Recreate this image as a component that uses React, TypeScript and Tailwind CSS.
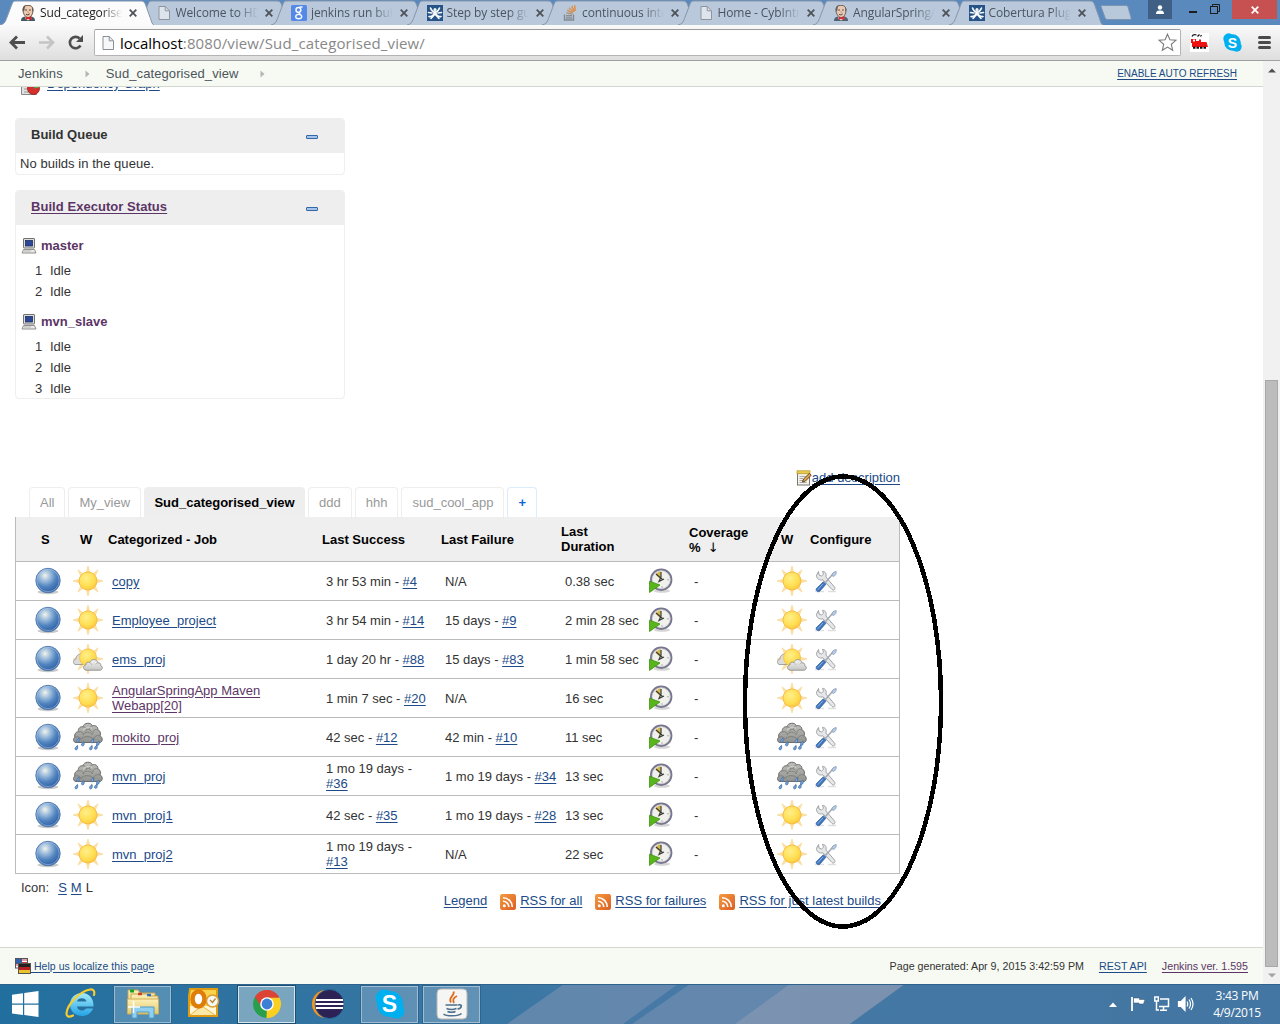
import React from "react";

type IconProps = { className?: string };

/* ---------- browser chrome icons ---------- */

const PageIcon = ({ className }: IconProps) => (
  <svg viewBox="0 0 16 16" className={className} width="16" height="16">
    <path d="M3 1.5h6.2l4.3 4.3v8.7H3z" fill="#f4f5f6" fillOpacity="0.7" stroke="#8a8f96" />
    <path d="M9.2 1.5v4.3h4.3" fill="none" stroke="#8a8f96" />
  </svg>
);

const JenkinsIcon = () => (
  <svg viewBox="0 0 16 16" width="16" height="16">
    <path d="M1 16c0-3 1.5-4 4-4.500h6c2.500.5 4 1.500 4 4.500z" fill="#3f5a66" />
    <path d="M5.500 11h5l1 2.500-3.500 2-3-2z" fill="#f4efe8" />
    <path d="M3 5c0-3.400 2-4.700 5-4.700s5 1.500 5 4.700c0 4-2 7.500-4.700 7.500S3 9 3 5z" fill="#eecbb0" stroke="#4a3a32" strokeWidth="0.8" />
    <path d="M3 6.500c-.8-3.500.3-6 3-6.200C4.600 1.500 4.800 3.500 4.200 6zM12.400 2c1.300 1.500 1 3.500.6 5l-.9-1z" fill="#5f554e" />
    <path d="M5.200 5h1.800M9 5h1.800M6 9.200c1.200 1 2.800.8 3.700-.3" stroke="#3c2e29" strokeWidth="0.9" fill="none" />
    <path d="M8 6v1.700l.8.200" stroke="#b98264" strokeWidth="0.7" fill="none" />
    <path d="M8 12.200l3.500-1v4l-3.500-1.200-2.500 1v-3.300z" fill="#d0232b" />
  </svg>
);

const GoogleIcon = () => (
  <span className="relative block h-4 w-4 rounded-[1.500px] bg-[#4a83ea]">
    <svg viewBox="0 0 16 16" width="16" height="16" fill="none" stroke="#fff">
      <circle cx="7.400" cy="4.900" r="2.400" strokeWidth="1.500" />
      <path d="M8.500 2h3M8.300 7.300c-.9 1 .4 1.300 1.300 2.200" strokeWidth="1.300" />
      <ellipse cx="7.700" cy="11.600" rx="3" ry="2.200" strokeWidth="1.400" />
    </svg>
  </span>
);

const CoberturaIcon = () => (
  <svg viewBox="0 0 16 16" width="16" height="16">
    <rect width="16" height="16" fill="#17477e" />
    <g stroke="#fff" fill="none" strokeWidth="1.600" strokeLinecap="round">
      <path d="M3.500 3c1 3 3 4 4.500 4.300C9.500 7 11.500 6 12.500 3M2 11.500c3 1 4-2 6-3 2 1 3 4 6 3M4 13.500L8 9l4 4.500M1.500 7.500L5 8M14.500 7.500L11 8" />
    </g>
    <circle cx="8" cy="4.500" r="1.500" fill="#fff" />
    <circle cx="8" cy="8.200" r="1.700" fill="#fff" />
  </svg>
);

const StackIcon = () => (
  <svg viewBox="0 0 16 16" width="16" height="16" fill="none" strokeWidth="1.400">
    <path d="M2.500 9.500v5.500h9V9.500" stroke="#7c8288" />
    <path d="M4 13h6M4 10.800h6" stroke="#83888d" />
    <path d="M4.300 7.800l6 1.500" stroke="#a9957c" />
    <path d="M5.200 5.200l5.500 3" stroke="#c58b55" />
    <path d="M7 2.700l4.500 4.500" stroke="#dd8a3c" />
    <path d="M9.700 1l2.600 5.500M12.700.3l.5 5.500" stroke="#e5822b" />
  </svg>
);

/* ---------- Jenkins icons ---------- */

const Ball = () => (
  <svg width="28" height="28" viewBox="0 0 28 28">
    <ellipse cx="14" cy="25" rx="10.500" ry="2.200" fill="#777" opacity="0.400" />
    <circle cx="14" cy="13.500" r="12.200" fill="url(#ballFill)" stroke="#4a74ad" strokeWidth="0.900" />
    <circle cx="14" cy="13.500" r="11.200" fill="none" stroke="#a9c5e6" strokeWidth="0.800" opacity="0.700" />
  </svg>
);

const sunRays =
  "M15 0l1.800 6.500h-3.600zM15 30l1.800-6.500h-3.600zM0 15l6.500-1.800v3.600zM30 15l-6.500-1.800v3.600zM5 3.800l5.500 4.200-2.600 2.500zM25 3.800l-5.500 4.200 2.600 2.500zM5 26.200l5.500-4.200-2.600-2.500zM25 26.200l-5.500-4.200 2.600-2.500z";

const Sun = () => (
  <svg width="30" height="30" viewBox="0 0 30 30">
    <path d={sunRays} fill="#fde2a0" stroke="#f6cf80" strokeWidth="0.500" />
    <circle cx="15" cy="15" r="9" fill="url(#sunFill)" stroke="#f5bd45" strokeWidth="1" />
  </svg>
);

const PartlyCloudy = () => (
  <svg width="30" height="30" viewBox="0 0 30 30">
    <path d={sunRays} fill="#fde2a0" stroke="#f6cf80" strokeWidth="0.500" />
    <path d="M2 20.500c-2.500-1.500-2-5 .8-5.300.2-3.500 3-6 6.200-5.200l2 10.500z" fill="#dcdcda" stroke="#8e8e8c" strokeWidth="0.800" />
    <circle cx="15" cy="13.500" r="8.500" fill="url(#sunFill)" stroke="#f5bd45" strokeWidth="0.800" />
    <path d="M13 26.200c-3-.3-3.400-4.500-.3-5.200-.1-2.600 2.500-3.500 4-2.400 1.300-4.100 7.300-4 8.200.3 2.200-.5 3.300 1.200 2.800 2.700 2.500.8 2 4.500-.9 4.600z" fill="url(#cloudFill)" stroke="#8f8f8d" strokeWidth="0.900" />
    <path d="M17 19c1 .2 1.700 1 1.800 2M24.800 19c-1 0-1.800.5-2.200 1.400" fill="none" stroke="#a9a9a7" strokeWidth="0.700" />
  </svg>
);

const drop = (x: number, y: number) => (
  <path key={`${x}-${y}`} d={`M${x + 2} ${y}c.4 2 .3 4.300-1.300 4.300S-1.300 2.800 ${x + 2} ${y}z`.replace("S-1.300 2.800 ", `c-1.900 0-1.500-2.300 1.300-4.300L`)} fill="#7aa6dc" stroke="#4674ae" strokeWidth="0.900" />
);

const Storm = () => (
  <svg width="30" height="30" viewBox="0 0 30 30">
    <path d="M3 20.500C0 20.200-.3 16.500 1.800 15.300 1 12 3 9.800 5.300 9.700 4.800 6.500 7.300 4.300 9.800 4.800c1.200-4.300 8-4.800 9.700-1 3-1 5.800 1.200 5.300 4 2.600.9 3.300 3.700 2.200 6 2.700 1.200 3.200 5.700.2 6.700z" fill="url(#stormFill)" stroke="#6c6c69" strokeWidth="1" />
    <g fill="none" stroke="#777774" strokeWidth="0.800">
      <path d="M5.500 9.800c3.200-.7 5 1 5 3.200M9.800 5c2.200-.4 4 1.300 4 3M19.400 4c-1.800.3-3 1.600-3 3.300M24.800 7.800c-3.500-.7-5.400 1.500-5 4M10 13c1-3.500 8-4 9.500 0M2 15.300c2.500-1.300 5.500 0 6 2.500M27 14c-3.400-1.200-6 .5-6.300 3.500M8 17.500c2-3.800 10-3.800 12.700 0M12 9.500c1.500-2.500 5-2.500 6.500 0" />
    </g>
    <path d="M10 8.500c2-3 6-4 9-2" fill="none" stroke="#d5d5d2" strokeWidth="1.200" opacity="0.700" />
    {drop(4, 16)}
    {drop(9, 19.500)}
    {drop(2.500, 23.500)}
    {drop(18.500, 16.500)}
    {drop(24, 19)}
    {drop(17, 23.500)}
    {drop(22, 23)}
  </svg>
);

const ClockIcon = () => (
  <svg width="24" height="26" viewBox="0 0 24 26">
    <ellipse cx="13" cy="23" rx="8" ry="1.800" fill="#888" opacity="0.350" />
    <circle cx="12.200" cy="11.700" r="10.200" fill="#f0f0ec" stroke="#77768f" strokeWidth="2" />
    <circle cx="12.200" cy="11.700" r="9" fill="none" stroke="#c9c9cf" strokeWidth="0.700" />
    <path d="M11.500 11.500L6.500 6.500C8.500 4 10.500 3.500 12 3.500z" fill="#d9b94a" />
    <path d="M7 6l6.500 5.500M12 4v5l-2 4.500 5-2.500" stroke="#3c3c36" strokeWidth="1.200" fill="none" />
    <circle cx="19" cy="11.700" r="0.700" fill="#999" />
    <circle cx="13" cy="19" r="0.700" fill="#999" />
    <path d="M.5 13.200l10.500 3.800L.5 24.500z" fill="#58b51c" stroke="#41920f" strokeWidth="0.800" />
  </svg>
);

const ToolsIcon = () => (
  <svg width="24" height="24" viewBox="0 0 24 24">
    <path d="M1 21.500h9M14 21.500h8" stroke="#999" strokeWidth="1.500" opacity="0.300" />
    <path d="M4.500 1.500l.5 3.500 2.500 1 2-1.700-1-3c3 .2 4.300 2.700 3.400 5.700l8.600 10c1.500 2-.8 4-2.500 2.500L9 9.800c-3.500.9-6.700-1-6.500-4.600z" fill="#e6e7e8" stroke="#999b9d" strokeWidth="0.900" />
    <path d="M11 13l7.500-8.500" stroke="#a4aab2" strokeWidth="1.600" />
    <path d="M18 5.500c-.3-2 1.500-3.700 4.200-3.900.3 2.200-1 4.400-3 4.900z" fill="#b9cbe1" stroke="#8199bb" strokeWidth="0.800" />
    <path d="M9.300 11.800l2.700 2.400-6.200 7c-1.500 1.600-4.800-.8-3.400-2.600z" fill="#4076bd" stroke="#2e5b9a" strokeWidth="0.700" />
    <path d="M9 13.800l-5.300 6" stroke="#8db3e2" strokeWidth="1" />
  </svg>
);

const ComputerIcon = () => (
  <svg width="16" height="16" viewBox="0 0 16 16">
    <rect x="2.500" y="0.500" width="11" height="9.500" rx="0.500" fill="#dededb" stroke="#72726f" />
    <rect x="4.500" y="2.500" width="7" height="5.500" fill="#2d4695" stroke="#1c2d63" strokeWidth="0.800" />
    <path d="M2.500 11.500h11l1.500 3.500H1z" fill="#e9e9e7" stroke="#858582" strokeWidth="0.900" />
    <path d="M3 13h7" stroke="#aaa" strokeWidth="0.800" />
  </svg>
);

const CollapseIcon = () => <span className="mt-px block h-[4px] w-[12px] rounded-[1px] border border-[#3465a4] bg-[#a5c5ea]" />;

const NotepadIcon = () => (
  <svg width="16" height="16" viewBox="0 0 16 16">
    <rect x="1.500" y="2" width="12" height="13" fill="#f3f2ec" stroke="#77756c" />
    <rect x="1" y="0.800" width="13" height="3" fill="#e9c94b" stroke="#a98a1c" strokeWidth="0.600" />
    <path d="M3.500 6.500h6M3.500 8.500h4M3.500 10.500h4M3.500 12.500h7" stroke="#aaa" />
    <path d="M6.500 12l1-3 5.800-5.500 1.900 1.700-5.700 5.800z" fill="#e1a24e" stroke="#5a3c17" strokeWidth="0.900" />
  </svg>
);

const RssIcon = () => (
  <svg width="16" height="16" viewBox="0 0 16 16">
    <rect width="16" height="16" rx="2.200" fill="url(#rssFill)" />
    <circle cx="4.300" cy="11.700" r="1.500" fill="#fff" />
    <path d="M3 7.200a5.800 5.800 0 0 1 5.800 5.800M3 3.700a9.300 9.300 0 0 1 9.300 9.300" fill="none" stroke="#fff" strokeWidth="1.600" />
  </svg>
);

const FlagsIcon = () => (
  <svg width="16" height="16" viewBox="0 0 16 16">
    <rect x="0.500" y="0.500" width="12" height="9.500" fill="#fff" stroke="#555" />
    <path d="M1 2h11M1 4.500h11M1 7h11" stroke="#cc3940" strokeWidth="1.200" />
    <rect x="1" y="1" width="6" height="5" fill="#3461a8" />
    <rect x="3.500" y="5.500" width="12" height="10" fill="#222" stroke="#55554d" />
    <rect x="4" y="9" width="11" height="3" fill="#b92025" />
    <rect x="4" y="12" width="11" height="3" fill="#eac42e" />
  </svg>
);

const Defs = () => (
  <svg width="0" height="0" className="absolute">
    <defs>
      <radialGradient id="ballFill" cx="0.38" cy="0.3" r="0.75">
        <stop offset="0" stopColor="#f1f4ea" />
        <stop offset="0.25" stopColor="#aac5df" />
        <stop offset="0.6" stopColor="#5285c0" />
        <stop offset="1" stopColor="#2a59a0" />
      </radialGradient>
      <radialGradient id="sunFill" cx="0.4" cy="0.35" r="0.8">
        <stop offset="0" stopColor="#fff08a" />
        <stop offset="0.6" stopColor="#ffdc4e" />
        <stop offset="1" stopColor="#f9b63a" />
      </radialGradient>
      <linearGradient id="cloudFill" x1="0" y1="0" x2="0" y2="1">
        <stop offset="0" stopColor="#f3f3f2" />
        <stop offset="1" stopColor="#c5c5c3" />
      </linearGradient>
      <linearGradient id="stormFill" x1="0" y1="0" x2="0" y2="1">
        <stop offset="0" stopColor="#bdbdba" />
        <stop offset="1" stopColor="#91918e" />
      </linearGradient>
      <linearGradient id="rssFill" x1="0" y1="0" x2="1" y2="1">
        <stop offset="0" stopColor="#f59a3f" />
        <stop offset="1" stopColor="#dc5f22" />
      </linearGradient>
      <linearGradient id="ieFill" x1="0" y1="0" x2="0" y2="1">
        <stop offset="0" stopColor="#a5ecfb" />
        <stop offset="1" stopColor="#23a2e4" />
      </linearGradient>
      <linearGradient id="folderFill" x1="0" y1="0" x2="0" y2="1">
        <stop offset="0" stopColor="#fbf0b8" />
        <stop offset="1" stopColor="#e6c869" />
      </linearGradient>
    </defs>
  </svg>
);

/* ---------- window frame ---------- */

type BrowserTab = { title: string; icon: React.ReactNode; active?: boolean };

const browserTabs: BrowserTab[] = [
  { title: "Sud_categorised_view", icon: <JenkinsIcon />, active: true },
  { title: "Welcome to HDFC", icon: <PageIcon /> },
  { title: "jenkins run build w", icon: <GoogleIcon /> },
  { title: "Step by step guide", icon: <CoberturaIcon /> },
  { title: "continuous integr", icon: <StackIcon /> },
  { title: "Home - CybIntranet", icon: <PageIcon /> },
  { title: "AngularSpringApp", icon: <JenkinsIcon /> },
  { title: "Cobertura Plugin", icon: <CoberturaIcon /> },
];

const BrowserTabItem = ({ title, icon, active }: BrowserTab) => (
  <div className={`relative -mr-[18px] h-[25px] w-[153.500px] shrink-0 ${active ? "z-10" : ""}`}>
    <svg className="absolute inset-0" width="154" height="25" viewBox="0 0 154 25">
      <path
        d="M0 25c4-1 5-2.500 6.500-6.500L12 4c1-2.500 2-3 4-3h125c2.500 0 3.500 1 4.500 3.500l5 14c1.300 4 1.500 5.500 3.500 6.500"
        fill={active ? "#fbfbfb" : "#b9c8db"}
        stroke={active ? "#8296b0" : "#8795aa"}
        strokeWidth="1"
      />
    </svg>
    <div className="relative flex h-[25px] items-center pl-[20px]">
      <span className={active ? "" : "opacity-90"}>{icon}</span>
      <span
        className={`ml-1 block w-[82px] overflow-hidden whitespace-nowrap font-['Open_Sans',sans-serif] text-[12px] leading-[20px] tracking-[-0.100px] [mask-image:linear-gradient(to_right,black_75%,transparent)] ${
          active ? "text-[#222]" : "text-[#4b5562]"
        }`}
      >
        {title}
      </span>
      <svg className="ml-[7px]" width="8" height="8" viewBox="0 0 8 8">
        <path d="M0.700 0.700l6.600 6.600M7.300 0.700L0.700 7.300" stroke="#4d5359" strokeWidth="1.800" />
      </svg>
    </div>
  </div>
);

const TitleBar = () => (
  <div className="relative flex h-[25px] items-start overflow-hidden bg-[#5a8abd]">
    {browserTabs.map((tab) => (
      <BrowserTabItem key={tab.title} {...tab} />
    ))}
    <svg className="ml-[16px] mt-[5px] shrink-0" width="32" height="16" viewBox="0 0 32 16">
      <path d="M1 1.500C1 .8 1.500.5 2.500.5h23c1.500 0 2 .5 2.500 1.500l3 10.500c.3 1.500 0 2-1 2H8c-1.500 0-2.500-.5-3-2z" fill="#b9c9dc" stroke="#7c93b2" />
    </svg>
    <div className="absolute right-0 top-0 flex h-[19px]">
      <div className="flex w-6 items-center justify-center bg-[#3f5f84]">
        <svg width="10" height="10" viewBox="0 0 10 10" fill="#fff">
          <circle cx="5" cy="2.500" r="2.200" />
          <path d="M1 9c0-3 1.500-3.600 4-3.600S9 6 9 9z" />
        </svg>
      </div>
      <div className="flex w-[38px] items-end justify-center pb-[6px] pl-[3px]">
        <span className="block h-[2px] w-2 bg-[#1d1d1d]" />
      </div>
      <div className="flex w-[22px] justify-start pt-1">
        <svg width="11" height="11" viewBox="0 0 11 11" fill="none" stroke="#1d1d1d">
          <rect x="0.500" y="2.500" width="7" height="7" />
          <path d="M2.500 2V.5h7v7H8" />
        </svg>
      </div>
      <div className="flex w-[45px] items-center justify-center bg-[#c75050]">
        <svg width="8" height="8" viewBox="0 0 8 8">
          <path d="M0.700 0.700l6.600 6.600M7.300 0.700L0.700 7.300" stroke="#fff" strokeWidth="1.700" />
        </svg>
      </div>
      <div className="w-[3px]" />
    </div>
  </div>
);

const Toolbar = () => (
  <div className="flex h-9 items-start border-b border-[#a0a0a0] bg-linear-to-b from-[#fafafa] to-[#dedede]">
    <svg className="ml-[9px] mt-[10px]" width="76" height="16" viewBox="0 0 76 16" fill="none">
      <path d="M16 7.500H2.500M8 1.500l-6 6 6 6" stroke="#4e4e4e" strokeWidth="2.800" />
      <path d="M30 7.500h13.500M38 1.500l6 6-6 6" stroke="#c4c4c4" strokeWidth="2.600" />
      <path d="M71.500 10.500A5.700 5.700 0 1 1 70.600 3.500" stroke="#4e4e4e" strokeWidth="2.600" />
      <path d="M74 0v7h-7z" fill="#4e4e4e" />
    </svg>
    <div className="ml-[9px] mt-[4px] flex h-[27px] w-[1087px] items-center rounded-[2px] border border-[#b4b4b4] border-t-[#9a9a9a] bg-white pl-[5px]">
      <PageIcon />
      <span className="ml-1 font-['Open_Sans',sans-serif] text-[15px] leading-[22px] text-[#888]">
        <span className="text-black">localhost</span>
        <span className="tracking-[0.120px]">:8080/view/Sud_categorised_view/</span>
      </span>
      <svg className="ml-auto mr-[3px]" width="19" height="19" viewBox="0 0 19 19">
        <path d="M9.500 1.200l2.400 5.600 6 .5-4.600 4 1.400 6-5.200-3.200-5.200 3.200 1.400-6-4.600-4 6-.5z" fill="#fff" stroke="#7a7a7a" strokeWidth="1.100" />
      </svg>
    </div>
    <svg className="ml-[9px] mt-[8px]" width="19" height="19" viewBox="0 0 19 19">
      <rect width="19" height="19" fill="#fff" />
      <path d="M2 3.500c1-2 3-2 4.500-1.500M7.500 3.500l2-2M10.500 3.500l1-1.500" stroke="#111" strokeWidth="1.300" fill="none" />
      <path d="M1 6h5v2h3V6.500h2V9h5.500l1.500 5H2V10H1z" fill="#ee1111" />
      <path d="M3 6.500h2v2H3z" fill="#fff" />
      <path d="M3 14.700h14" stroke="#111" strokeWidth="2" strokeDasharray="2.500 1" />
    </svg>
    <SkypeBadge className="ml-[14px] mt-[8px] h-[19px] w-[19px] text-[14px]" />
    <div className="ml-[16px] mt-[11px] flex flex-col gap-[2px]">
      <span className="h-[3px] w-[13px] rounded-full bg-[#4a4a4a]" />
      <span className="h-[3px] w-[13px] rounded-full bg-[#4a4a4a]" />
      <span className="h-[3px] w-[13px] rounded-full bg-[#4a4a4a]" />
    </div>
  </div>
);

function SkypeBadge({ className }: IconProps) {
  return (
    <span className={`relative flex items-center justify-center ${className}`}>
      <svg className="absolute inset-0 h-full w-full" viewBox="0 0 30 30">
        <circle cx="15" cy="15" r="13" fill="#00aff0" />
        <circle cx="9" cy="9" r="8.500" fill="#00aff0" />
        <circle cx="21.500" cy="21.500" r="8" fill="#00aff0" />
      </svg>
      <span className="relative font-['Liberation_Sans',sans-serif] font-bold leading-none text-white">S</span>
    </span>
  );
}

/* ---------- Jenkins page ---------- */

const Link = ({ children, visited, className = "" }: { children: React.ReactNode; visited?: boolean; className?: string }) => (
  <a className={`underline underline-offset-[1.500px] ${visited ? "text-[#5c3566]" : "text-[#204a87]"} ${className}`}>{children}</a>
);

const Breadcrumbs = () => (
  <div className="flex h-[26px] items-center border-b border-[#d3d7cf] bg-[#f6faf2] pl-[18px] pr-[26px] text-[#4d545d]">
    <span className="tracking-[0.100px]">Jenkins</span>
    <svg className="ml-[22px] mt-px" width="5" height="8" viewBox="0 0 5 8">
      <path d="M0.500 0.500L4.500 4 .5 7.500z" fill="#b5b5b5" />
    </svg>
    <span className="ml-[16px] tracking-[0.100px]">Sud_categorised_view</span>
    <svg className="ml-[21px] mt-px" width="5" height="8" viewBox="0 0 5 8">
      <path d="M0.500 0.500L4.500 4 .5 7.500z" fill="#b5b5b5" />
    </svg>
    <Link className="ml-auto text-[10px] leading-[12px]">ENABLE AUTO REFRESH</Link>
  </div>
);

const SidePane = ({ title, children, className }: { title: React.ReactNode; children: React.ReactNode; className: string }) => (
  <section className={`w-[330px] overflow-hidden rounded-[4px] border border-[#eee] ${className}`}>
    <header className="flex h-[34px] items-center bg-[#eee] pl-[15px] pr-[26px] pb-[3px] font-bold">
      <span>{title}</span>
      <span className="ml-auto pt-[3px]">
        <CollapseIcon />
      </span>
    </header>
    {children}
  </section>
);

const Node = ({ name, executors, className }: { name: string; executors: number; className: string }) => (
  <div className={className}>
    <div className="flex h-[21px] items-center pl-[5px]">
      <ComputerIcon />
      <span className="ml-1 pb-px font-bold text-[#5c3566]">{name}</span>
    </div>
    <div className="pt-[4px]">
      {Array.from({ length: executors }, (_, i) => (
        <div key={i} className="flex h-[21px] items-center pl-[19px]">
          <span className="w-[15px]">{i + 1}</span>
          <span>Idle</span>
        </div>
      ))}
    </div>
  </div>
);

type Run = { text: string; build?: string };
type Job = { name: string; visited?: boolean; weather: "sun" | "cloud" | "storm"; success: Run; failure: Run; duration: string };

const jobs: Job[] = [
  { name: "copy", weather: "sun", success: { text: "3 hr 53 min", build: "#4" }, failure: { text: "N/A" }, duration: "0.38 sec" },
  { name: "Employee_project", weather: "sun", success: { text: "3 hr 54 min", build: "#14" }, failure: { text: "15 days", build: "#9" }, duration: "2 min 28 sec" },
  { name: "ems_proj", weather: "cloud", success: { text: "1 day 20 hr", build: "#88" }, failure: { text: "15 days", build: "#83" }, duration: "1 min 58 sec" },
  { name: "AngularSpringApp Maven Webapp[20]", visited: true, weather: "sun", success: { text: "1 min 7 sec", build: "#20" }, failure: { text: "N/A" }, duration: "16 sec" },
  { name: "mokito_proj", visited: true, weather: "storm", success: { text: "42 sec", build: "#12" }, failure: { text: "42 min", build: "#10" }, duration: "11 sec" },
  { name: "mvn_proj", weather: "storm", success: { text: "1 mo 19 days", build: "#36" }, failure: { text: "1 mo 19 days", build: "#34" }, duration: "13 sec" },
  { name: "mvn_proj1", weather: "sun", success: { text: "42 sec", build: "#35" }, failure: { text: "1 mo 19 days", build: "#28" }, duration: "13 sec" },
  { name: "mvn_proj2", weather: "sun", success: { text: "1 mo 19 days", build: "#13" }, failure: { text: "N/A" }, duration: "22 sec" },
];

const Weather = ({ kind }: { kind: Job["weather"] }) => (kind === "sun" ? <Sun /> : kind === "cloud" ? <PartlyCloudy /> : <Storm />);

const RunCell = ({ run, className }: { run: Run; className: string }) => (
  <div className={className}>
    {run.text}
    {run.build && (
      <>
        {" - "}
        <Link>{run.build}</Link>
      </>
    )}
  </div>
);

const columns = "grid grid-cols-[52px_40px_214px_119px_120px_87px_42px_80px_38px_91px] items-center";

const views = ["All", "My_view", "Sud_categorised_view", "ddd", "hhh", "sud_cool_app"];

const ViewTabs = () => (
  <div className="ml-[14px] flex h-[30px] items-end gap-[3px]">
    {views.map((view) =>
      view === "Sud_categorised_view" ? (
        <div key={view} className="flex h-[30px] w-[161px] items-center justify-center rounded-t-[4px] bg-[#eee] font-bold text-black">
          {view}
        </div>
      ) : (
        <div key={view} className="flex h-[30px] items-center justify-center rounded-t-[4px] border border-b-0 border-[#eee] px-[10px] text-[#999]">
          {view}
        </div>
      ),
    )}
    <div className="flex h-[30px] w-[30px] items-center justify-center rounded-t-[4px] border border-b-0 border-[#d9edff] font-bold text-[#0b65d8]">+</div>
  </div>
);

const JobTable = () => (
  <div className="border-x border-[#bbb]">
    <div className={`${columns} h-[45px] border-b border-[#bbb] bg-[#efefef] font-bold text-black`}>
      <span className="pl-[25px]">S</span>
      <span className="pl-[12px]">W</span>
      <span>Categorized - Job</span>
      <span>Last Success</span>
      <span>Last Failure</span>
      <span className="w-[60px]">Last Duration</span>
      <span />
      <span className="-ml-px pt-px">
        Coverage
        <br />%&nbsp; <span className="font-['DejaVu_Sans',sans-serif] font-normal leading-[12px]">↓</span>
      </span>
      <span className="pl-[11px]">W</span>
      <span className="pl-[2px]">Configure</span>
    </div>
    {jobs.map((job) => (
      <div key={job.name} className={`${columns} h-[39px] border-b border-[#bbb]`}>
        <div className="pl-[18px]">
          <Ball />
        </div>
        <div className="pl-[5px]">
          <Weather kind={job.weather} />
        </div>
        <div className="w-[180px] pl-1">
          <Link visited={job.visited}>{job.name}</Link>
        </div>
        <RunCell run={job.success} className="w-[110px] pl-1" />
        <RunCell run={job.failure} className="whitespace-nowrap pl-1" />
        <div className="whitespace-nowrap pl-1">{job.duration}</div>
        <div className="pl-[1px]">
          <ClockIcon />
        </div>
        <div className="pl-1">-</div>
        <div className="pl-[7px]">
          <Weather kind={job.weather} />
        </div>
        <div className="pl-[6px] pt-px">
          <ToolsIcon />
        </div>
      </div>
    ))}
  </div>
);

const Feed = ({ children, className }: { children: string; className?: string }) => (
  <span className={`flex items-center ${className ?? ""}`}>
    <span className="mt-[3px]">
      <RssIcon />
    </span>
    <Link className="ml-1">{children}</Link>
  </span>
);

const PageBody = () => (
  <div className="relative flex h-[860px] flex-col overflow-hidden pl-[15px]">
    <div className="-mt-[10px] flex h-[18px] shrink-0 items-center pl-[6px]">
      <svg width="20" height="18" viewBox="0 0 20 18">
        <path d="M.5 1.500h15v16H.5z" fill="#e1e1df" stroke="#888" />
        <path d="M3 12h5M3 15h5" stroke="#999" />
        <circle cx="12.500" cy="11.500" r="6" fill="#d6302d" stroke="#8e1d1b" strokeWidth="0.800" />
        <path d="M12.500 11.500V5.500a6 6 0 0 1 5.500 4z" fill="#3461b0" />
        <path d="M12.500 11.500l3.500-5 2.500 4z" fill="#62ae38" />
      </svg>
      <Link className="ml-[6px] -mt-[6px] no-underline">Dependency Graph</Link>
    </div>

    <SidePane title="Build Queue" className="mt-[23px] h-[57px] shrink-0">
      <p className="pl-[4px] pt-[3px] tracking-[0.050px]">No builds in the queue.</p>
    </SidePane>

    <SidePane
      title={
        <Link visited className="tracking-[0.050px]">
          Build Executor Status
        </Link>
      }
      className="mt-[15px] h-[209px] shrink-0"
    >
      <Node name="master" executors={2} className="pt-[10px]" />
      <Node name="mvn_slave" executors={3} className="pt-[9px]" />
    </SidePane>

    <main className="mt-[70px] w-[885px] shrink-0">
      <div className="flex h-[18px] items-center justify-end">
        <NotepadIcon />
        <Link className="-mt-[2px]">add description</Link>
      </div>
      <ViewTabs />
      <JobTable />
      <div className="flex justify-between pl-[6px] pr-[19px]">
        <div className="flex gap-1 pt-[6px]">
          <span className="mr-[5px]">Icon:</span>
          <Link>S</Link>
          <Link>M</Link>
          <span>L</span>
        </div>
        <div className="flex items-center gap-[13px] pt-[17px]">
          <Link>Legend</Link>
          <Feed>RSS for all</Feed>
          <Feed>RSS for failures</Feed>
          <Feed>RSS for just latest builds</Feed>
        </div>
      </div>
    </main>

    <svg className="absolute left-[740px] top-[384px]" width="208" height="462" viewBox="0 0 208 462" shapeRendering="crispEdges">
      <ellipse cx="103" cy="230.500" rx="98" ry="225" fill="none" stroke="#000" strokeWidth="4.500" />
    </svg>
  </div>
);

const PageFooter = () => (
  <footer className="flex h-[37px] items-center border-t border-[#d3d7cf] bg-[#f6faf2] pl-[15px] pr-[15px] text-[11px]">
    <FlagsIcon />
    <Link className="whitespace-pre text-[10.500px] tracking-[0.050px]"> Help us localize this page</Link>
    <span className="ml-auto text-[10.700px]">Page generated: Apr 9, 2015 3:42:59 PM</span>
    <Link className="ml-[15px] text-[10.700px]">REST API</Link>
    <Link visited className="ml-[15px] text-[10.700px]">
      Jenkins ver. 1.595
    </Link>
  </footer>
);

const Scrollbar = () => (
  <div className="flex w-[17px] flex-col items-center bg-[#f1f1f1]">
    <svg className="mt-[7px]" width="8" height="5" viewBox="0 0 8 5">
      <path d="M0 4.500L4 .5l4 4z" fill="#505050" />
    </svg>
    <div className="mt-[307px] h-[587px] w-[13px] border border-[#a8a8a8] bg-[#bcbcbc]" />
    <svg className="mt-[6px]" width="8" height="5" viewBox="0 0 8 5">
      <path d="M0 .5l4 4 4-4z" fill="#a3a3a3" />
    </svg>
  </div>
);

/* ---------- Windows taskbar ---------- */

const TaskButton = ({ children, active, className = "" }: { children: React.ReactNode; active?: boolean; className?: string }) => (
  <div
    className={`flex h-[39px] w-[59px] items-center justify-center border outline outline-1 -outline-offset-2 ${
      active ? "border-[#1d4f75] bg-[#79a5bf] outline-[#d5e6ef]" : "border-[#2c668f] bg-white/20 outline-white/40"
    } ${className}`}
  >
    {children}
  </div>
);

const Taskbar = () => (
  <div className="relative h-10 bg-linear-to-r from-[#216f9e] via-[#4179a5] to-[#3a709d]">
    <svg className="absolute inset-0" width="1280" height="40" viewBox="0 0 1280 40">
      <path d="M564 0H905L850 40H507z" fill="#6f8cb0" opacity="0.750" />
      <path d="M790 0H905L850 40H735z" fill="#a0a4b5" opacity="0.400" />
      <path d="M678 0h12l-58 40h-9z" fill="#4779a6" />
      <path d="M905 0h375v40H850z" fill="#4a79a5" opacity="0.600" />
      <path d="M0 .5h1280" stroke="#2d638c" />
    </svg>
    <div className="relative flex h-10 items-center">
      <svg className="ml-[12px]" width="27" height="26" viewBox="0 0 27 26" fill="#fff">
        <path d="M0 3.700l11-1.500v10.300H0zM12.200 2L26.500 0v12.500H12.200zM0 13.700h11V24L0 22.400zM12.200 13.700h14.300V26l-14.300-2z" />
      </svg>
      <svg className="ml-[26px] -mt-[2px]" width="32" height="32" viewBox="0 0 32 32">
        <path d="M28.500 19.500H12c.5 4.500 6.500 5.500 9 2h7c-2 5-6 7.500-11 7.500C10 29 5 24 5 17.500S10 6 17 6s12 5.500 11.500 13.500zM12 14.500h9.500c-.5-4.500-9-4.500-9.500 0z" fill="url(#ieFill)" />
        <path d="M29 8c1-4-.5-6-4-5.500C15 4 2.500 17 1.500 26c-.3 4 2.500 4.500 6.500 2.500" fill="none" stroke="#f7cc2e" strokeWidth="2.200" strokeLinecap="round" />
      </svg>
      <TaskButton className="ml-[16px]">
        <svg width="34" height="32" viewBox="0 0 34 32">
          <path d="M2 2h10l2 3h15v20H2z" fill="url(#folderFill)" stroke="#c7a34a" />
          <path d="M4 3h4" stroke="#17a22b" strokeWidth="3" />
          <path d="M9 6h12l2 2h9v17H5V6z" fill="url(#folderFill)" stroke="#c7a34a" />
          <path d="M12 6h4" stroke="#c5442d" strokeWidth="2.500" />
          <path d="M21 7h4" stroke="#2d6fc5" strokeWidth="2.500" />
          <path d="M1.500 11h31v15h-31z" fill="url(#folderFill)" stroke="#cfae55" />
          <path d="M6 30V19h22v11h-5v-6H11v6z" fill="#8fcff0" stroke="#519cc9" />
          <path d="M7.500 13v12M2 19h12" stroke="#fff" strokeWidth="1.500" />
        </svg>
      </TaskButton>
      <svg className="ml-[16px] -mt-[2px]" width="32" height="32" viewBox="0 0 32 32">
        <path d="M2 2h27v27H1V9z" fill="#fbd34a" stroke="#e19b12" strokeWidth="2" />
        <path d="M2 19h26v9H2z" fill="#fff7da" />
        <path d="M2 28l12-9 13 9" fill="#fce9a8" stroke="#e9b93f" />
        <ellipse cx="10.500" cy="12" rx="6" ry="7.500" fill="#fff" stroke="#de7d0a" strokeWidth="4.500" />
        <circle cx="24.500" cy="14" r="6" fill="#f7f7f3" stroke="#dc9b30" strokeWidth="1.500" />
        <path d="M22 13l2.500 2.500 3-4" fill="none" stroke="#b78134" strokeWidth="1.300" />
      </svg>
      <TaskButton active className="ml-[17px]">
        <svg width="30" height="30" viewBox="0 0 30 30">
          <path d="M15 15L2.900 8A14 14 0 0 1 27.100 8z" fill="#db4335" />
          <path d="M15 15h-1L2.900 8A14 14 0 0 0 15 29l6-10.500z" fill="#279f4c" />
          <path d="M15 15V8.500h12.400A14 14 0 0 1 14.500 29z" fill="#fbcf20" />
          <path d="M3 8c2-4 7-7 12-7s10 3 12.300 7.500H15L9 17z" fill="#db4335" />
          <circle cx="15" cy="15" r="6.800" fill="#fff" />
          <circle cx="15" cy="15" r="5.400" fill="#3e7fd6" />
        </svg>
      </TaskButton>
      <svg className="ml-[16px] -mt-px" width="32" height="30" viewBox="0 0 32 30">
        <circle cx="14" cy="15" r="14" fill="#f7941e" />
        <circle cx="17.500" cy="15" r="14.500" fill="#2c2255" stroke="#256c99" strokeWidth="0.800" />
        <path d="M4 11h27M3.500 15h28M4 19h27" stroke="#fff" strokeWidth="2" />
      </svg>
      <TaskButton className="ml-[16px]">
        <SkypeBadge className="h-[30px] w-[30px] text-[23px]" />
      </TaskButton>
      <TaskButton className="ml-[3px]">
        <svg width="32" height="32" viewBox="0 0 32 32">
          <rect x="1" y="1" width="30" height="30" rx="4" fill="#f5f5f3" stroke="#b7b7b5" />
          <path d="M17.500 3.500c2 4-6 6-2.500 11M21 8c-4 2-4.500 4-3 7" fill="none" stroke="#e06a1c" strokeWidth="1.800" />
          <path d="M9.500 17h12M10.500 20.500c3 1.200 7 1.200 10 0M11.500 23.500c2.500 1 5.500 1 8 0M22 17c5-1.500 4 3.500-.5 4M7.500 26c3 2.500 15 2.500 18-.5" fill="none" stroke="#4c708f" strokeWidth="1.600" />
        </svg>
      </TaskButton>

      <div className="ml-auto flex items-center">
        <svg width="8" height="5" viewBox="0 0 8 5">
          <path d="M0 5l4-4.500L8 5z" fill="#fff" />
        </svg>
        <svg className="ml-[12px]" width="18" height="18" viewBox="0 0 18 18">
          <path d="M3 2v14" stroke="#fff" strokeWidth="1.800" />
          <path d="M4.500 3h6v1.500h5.500L14.500 9H10V8H4.500z" fill="#fff" stroke="#34536f" strokeWidth="0.500" />
        </svg>
        <svg className="ml-[6px]" width="18" height="18" viewBox="0 0 18 18" fill="none" stroke="#fff" strokeWidth="1.500">
          <path d="M7 4h8.500v7.500H6M10.500 12v3M7 15.300h7M3.500 6v9H6" />
          <rect x="1.800" y="2" width="3.500" height="4" />
        </svg>
        <svg className="ml-[6px]" width="18" height="18" viewBox="0 0 18 18" fill="none" stroke="#fff" strokeWidth="1.200">
          <path d="M1.500 6.500h2.700L8 2.500v13l-3.800-4H1.500z" fill="#fff" />
          <path d="M10 6.500q1.500 2.500 0 5M12 4.500q3 4.500 0 9M14 3q4 6 0 12" />
        </svg>
        <div className="ml-[14px] mr-[15px] w-[56px] whitespace-nowrap text-center font-['Open_Sans',sans-serif] text-[12px] leading-[17px] tracking-[-0.300px] text-white">
          <div>3:43 PM</div>
          <div>4/9/2015</div>
        </div>
      </div>
    </div>
  </div>
);

export default function App() {
  return (
    <div className="h-[1024px] w-[1280px] overflow-hidden bg-white font-['Liberation_Sans',Arial,sans-serif] text-[13px] leading-[15px] text-[#333]">
      <Defs />
      <TitleBar />
      <Toolbar />
      <div className="flex h-[923px]">
        <div className="w-[1263px]">
          <Breadcrumbs />
          <PageBody />
          <PageFooter />
        </div>
        <Scrollbar />
      </div>
      <Taskbar />
    </div>
  );
}
